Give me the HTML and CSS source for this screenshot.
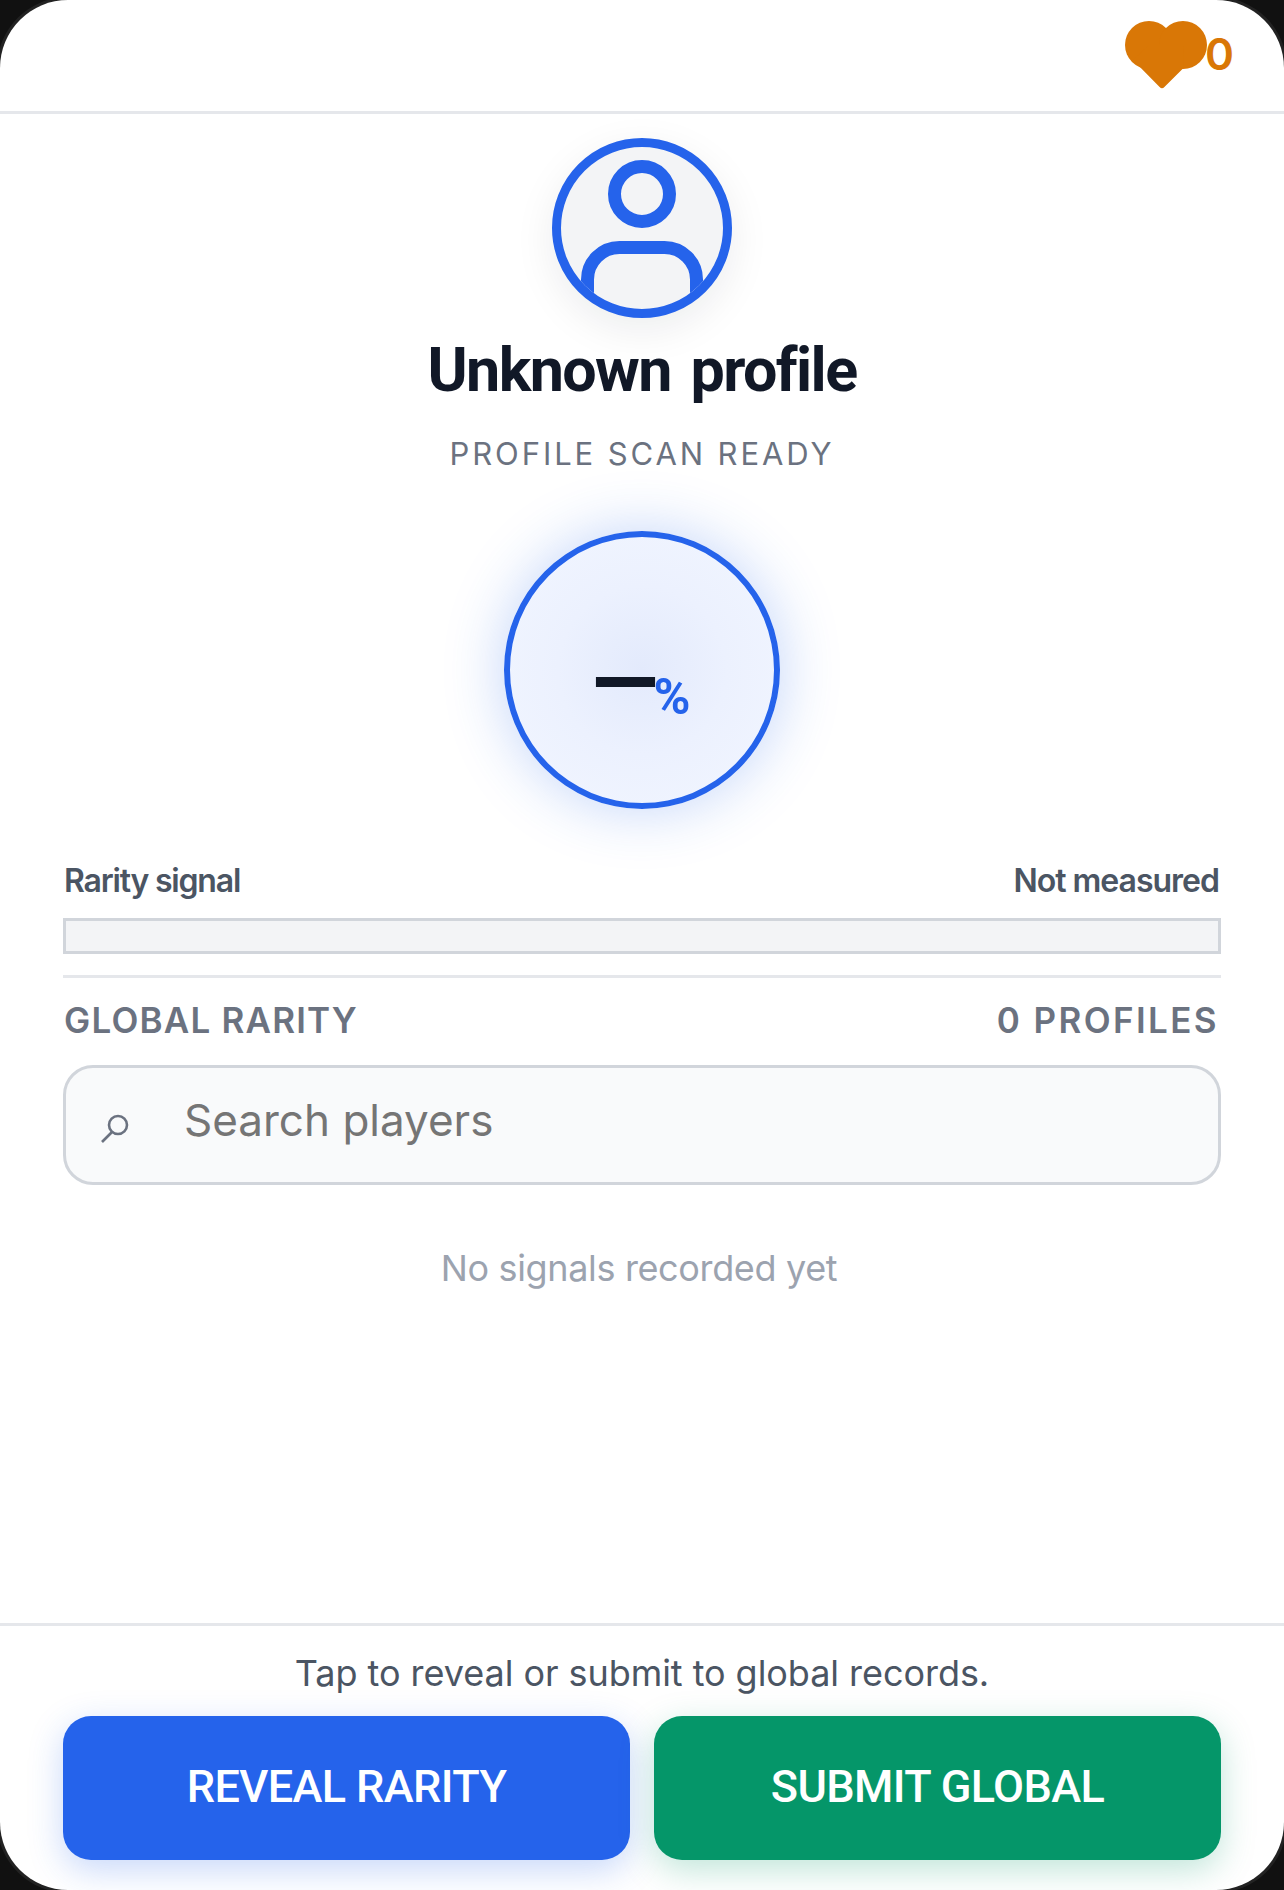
FILE: index.html
```html
<!DOCTYPE html>
<html>
<head>
  <meta charset="utf-8">
  <title>Rarity</title>
  <link rel="stylesheet" href="styles.css">
</head>
<body>
  <div class="app">
    <header class="topbar">
      <div class="likes">
        <!-- heart: two round lobes over a pointed base -->
        <svg class="heart" viewBox="0 0 82 68" aria-hidden="true">
          <circle cx="24" cy="24" r="24"></circle>
          <circle cx="58" cy="24" r="24"></circle>
          <path d="M8 39 L34.6 66 Q37 68.4 39.4 66 L59 46.5 L58 24 L24 24 Z"></path>
        </svg>
        <span class="likes-count">0</span>
      </div>
    </header>

    <main class="content">
      <div class="avatar">
        <svg viewBox="0 0 162 162" aria-hidden="true">
          <circle cx="81" cy="47" r="27.5"></circle>
          <rect x="26.5" y="100.5" width="109" height="110" rx="32"></rect>
        </svg>
      </div>
      <h1 class="name">Unknown profile</h1>
      <p class="status">PROFILE SCAN READY</p>

      <div class="score">
        <span class="score-value">—</span><span class="score-unit">%</span>
      </div>

      <div class="signal-row">
        <span class="signal-label">Rarity signal</span>
        <span>Not measured</span>
      </div>
      <div class="signal-bar"></div>

      <div class="section-head">
        <span class="section-title">GLOBAL RARITY</span>
        <span>0 PROFILES</span>
      </div>

      <label class="search">
        <svg class="search-icon" viewBox="0 0 28 29" aria-hidden="true">
          <circle cx="17" cy="11" r="9"></circle>
          <path d="M11 18 L1 28"></path>
        </svg>
        <input type="text" placeholder="Search players">
      </label>

      <p class="empty">No signals recorded yet</p>
    </main>

    <footer class="actions">
      <p class="hint">Tap to reveal or submit to global records.</p>
      <div class="buttons">
        <button type="button" class="btn btn-reveal">REVEAL RARITY</button>
        <button type="button" class="btn btn-submit">SUBMIT GLOBAL</button>
      </div>
    </footer>
  </div>
</body>
</html>
```

FILE: styles.css
```css
* {
    padding: 0;
    margin: 0;
    box-sizing: border-box;
}

html,
body {
    height: 100%;
    overflow: hidden;
}

body {
    background-color: #111111;
    font-family: Inter, "Liberation Sans", sans-serif;
}

.app {
    display: flex;
    flex-direction: column;
    height: 1890px;
    background-color: #fff;
    border-radius: 68px;
    box-shadow: 0 0 0 3px #222222;
    overflow: hidden;
}

.topbar {
    display: flex;
    justify-content: flex-end;
    height: 114px;
    padding: 21px 50px 0 0;
    border-bottom: 3px solid #e5e7eb;
}

.likes {
    display: flex;
    align-items: flex-start;
}

.heart {
    display: block;
    width: 82px;
    height: 68px;
    margin-right: -2px;
    fill: #d97706;
}

.likes-count {
    margin-top: 8px;
    font-size: 44px;
    line-height: 50px;
    font-weight: 600;
    color: #d97706;
}

.content {
    flex: 1;
    display: flex;
    flex-direction: column;
    align-items: center;
    padding: 24px 63px 0;
}

.avatar {
    width: 180px;
    height: 180px;
    border: 9px solid #2563eb;
    border-radius: 50%;
    background-color: #f3f4f6;
    box-shadow: 0 12px 40px rgba(17, 24, 39, 0.08);
    overflow: hidden;
}

.avatar svg {
    display: block;
    width: 162px;
    height: 162px;
    fill: none;
    stroke: #2563eb;
    stroke-width: 13;
}

.name {
    margin-top: 17px;
    font-family: Roboto, sans-serif;
    font-size: 61px;
    line-height: 70px;
    font-weight: 700;
    letter-spacing: -1.6px;
    word-spacing: 6px;
    color: #111827;
}

.status {
    margin-top: 29px;
    font-size: 31px;
    line-height: 40px;
    letter-spacing: 2.9px;
    color: #6b7280;
}

.score {
    display: flex;
    align-items: flex-start;
    justify-content: center;
    width: 276px;
    height: 278px;
    margin-top: 57px;
    padding-top: 104px;
    border: 6px solid #2563eb;
    border-radius: 50%;
    background: radial-gradient(circle, #e3eafc 0%, #ecf1fe 45%, #f2f6ff 100%);
    box-shadow: 0 0 60px rgba(37, 99, 235, 0.28);
}

.score-value {
    font-family: "DejaVu Sans", sans-serif;
    font-size: 64px;
    line-height: 74px;
    font-weight: 700;
    color: #111827;
    -webkit-text-stroke: 2px #111827;
}

.score-unit {
    margin-top: 27px;
    margin-left: -4px;
    font-family: Roboto, sans-serif;
    font-size: 50px;
    line-height: 58px;
    font-weight: 700;
    color: #2563eb;
}

.signal-row {
    display: flex;
    justify-content: space-between;
    width: 100%;
    margin-top: 52px;
    padding: 0 2px;
    font-size: 32px;
    line-height: 40px;
    font-weight: 600;
    letter-spacing: -1px;
    color: #4b5563;
}

.signal-label {
    margin-left: -1px;
    letter-spacing: -1.2px;
}

.signal-bar {
    width: 100%;
    height: 36px;
    margin-top: 17px;
    border: 3px solid #d1d5db;
    background-color: #f3f4f6;
}

.section-head {
    display: flex;
    justify-content: space-between;
    width: 100%;
    margin-top: 21px;
    padding: 21px 2px 0;
    border-top: 3px solid #e5e7eb;
    font-size: 35px;
    line-height: 42px;
    font-weight: 600;
    letter-spacing: 2.4px;
    color: #6b7280;
}

.section-title {
    margin-left: -1px;
    letter-spacing: 1.2px;
}

.search {
    display: flex;
    align-items: center;
    width: 100%;
    height: 120px;
    margin-top: 24px;
    padding-left: 35px;
    border: 3px solid #d1d5db;
    border-radius: 30px;
    background-color: #f9fafb;
}

.search-icon {
    flex: none;
    width: 28px;
    height: 29px;
    margin-top: 6px;
    fill: none;
    stroke: #6b7280;
    stroke-width: 2.6;
}

.search input {
    flex: 1;
    margin-left: 55px;
    margin-bottom: 10px;
    border: none;
    outline: none;
    background: transparent;
    font-family: inherit;
    font-size: 44px;
    line-height: 54px;
}

.empty {
    margin-top: 61px;
    margin-right: 6px;
    font-size: 36px;
    line-height: 44px;
    letter-spacing: -0.35px;
    color: #9ca3af;
}

.actions {
    padding: 0 63px 30px;
    border-top: 3px solid #e5e7eb;
}

.hint {
    margin-top: 25px;
    font-size: 36px;
    line-height: 44px;
    letter-spacing: -0.05px;
    text-align: center;
    color: #4b5563;
}

.buttons {
    display: flex;
    gap: 24px;
    margin-top: 21px;
}

.btn {
    flex: 1;
    height: 144px;
    padding-bottom: 4px;
    border: none;
    border-radius: 28px;
    font-family: Roboto, sans-serif;
    font-size: 45px;
    font-weight: 500;
    letter-spacing: -0.6px;
    color: #fff;
}

.btn-reveal {
    background-color: #2563eb;
    box-shadow: 0 10px 34px rgba(37, 99, 235, 0.25);
}

.btn-submit {
    background-color: #059669;
    box-shadow: 0 10px 34px rgba(5, 150, 105, 0.25);
}
```
